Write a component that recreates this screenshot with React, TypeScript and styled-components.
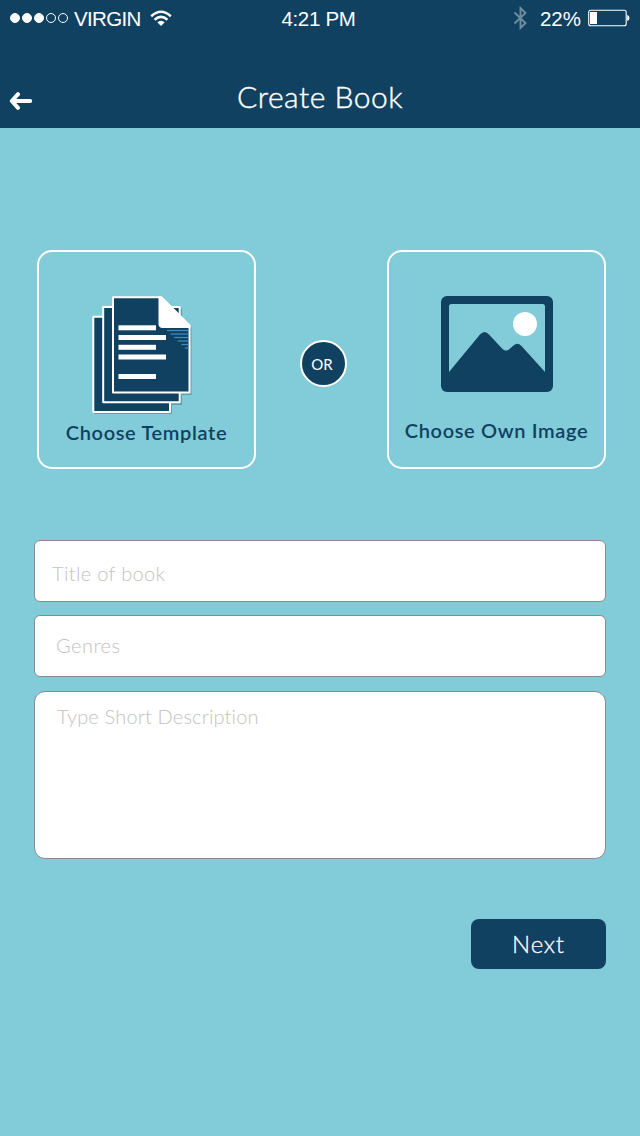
import React from "react";
import styled, { createGlobalStyle } from "styled-components";

const navy = "#114160";
const sky = "#82cbd8";

const GlobalStyle = createGlobalStyle`
  * { box-sizing: border-box; }
  body { margin: 0; background: ${sky}; }
`;

const Screen = styled.div`
  width: 640px;
  height: 1136px;
  background: ${sky};
  font-family: Lato, "Liberation Sans", sans-serif;
  overflow: hidden;
`;

const Header = styled.header`
  height: 128px;
  background: ${navy};
  color: #fff;
`;

const StatusBar = styled.div`
  display: grid;
  grid-template-columns: 1fr auto 1fr;
  grid-template-rows: 36px;
  align-items: center;
  height: 36px;
  padding: 0 10px 0 9px;
  font-family: "Liberation Sans", sans-serif;
  font-size: 20.5px;
  line-height: 36px;
  white-space: nowrap;
`;

const StatusGroup = styled.div<{ $end?: boolean }>`
  display: flex;
  align-items: center;
  justify-content: ${(p) => (p.$end ? "flex-end" : "flex-start")};
`;

const StatusText = styled.span<{ $spacing?: number; $shift?: number }>`
  padding-top: 2px;
  margin-right: ${(p) => p.$shift ?? 0}px;
  letter-spacing: ${(p) => p.$spacing ?? 0}px;
`;

const Signal = styled.div`
  display: flex;
  gap: 2px;
  margin: 0 6px 0 1px;
`;

const SignalDot = styled.i<{ $on: boolean }>`
  width: 10px;
  height: 10px;
  border: 1px solid #fff;
  border-radius: 50%;
  background: ${(p) => (p.$on ? "#fff" : "transparent")};
`;

const WifiIcon = styled.svg`
  margin-left: 9px;
`;

const BluetoothIcon = styled.svg`
  margin-right: 12px;
`;

const BatteryIcon = styled.svg`
  margin-left: 7px;
`;

const NavBar = styled.div`
  display: grid;
  grid-template-columns: 60px 1fr 60px;
  align-items: start;
  height: 92px;
`;

const BackButton = styled.button`
  display: flex;
  padding: 56px 0 0 9px;
  border: 0;
  background: none;
`;

const Title = styled.h1`
  margin: 0;
  height: 92px;
  text-align: center;
  font-size: 30px;
  font-weight: 300;
  line-height: 120px;
  letter-spacing: 0.5px;
  -webkit-text-stroke: 0.4px #fff;
`;

const Main = styled.main`
  display: flex;
  flex-direction: column;
  padding: 122px 34px 0;
`;

const Choices = styled.section`
  display: flex;
  align-items: center;
  justify-content: space-between;
  padding-left: 3px;
  margin-bottom: 71px;
`;

const ChoiceCard = styled.button<{ $labelGap: number }>`
  display: flex;
  flex-direction: column;
  align-items: center;
  justify-content: flex-start;
  gap: ${(p) => p.$labelGap}px;
  width: 219px;
  height: 219px;
  padding: 44px 0 0;
  border: 2px solid #fff;
  border-radius: 15px;
  background: transparent;
  color: ${navy};
  font-family: inherit;
`;

const ChoiceLabel = styled.span`
  font-size: 20px;
  font-weight: 600;
  line-height: 24px;
  letter-spacing: 0.65px;
  white-space: nowrap;
`;

const OrBadge = styled.div`
  width: 47px;
  height: 47px;
  margin: 8px 0 0 4px;
  padding-right: 3px;
  border: 2px solid #fff;
  border-radius: 50%;
  background: ${navy};
  color: #fff;
  font-size: 15px;
  line-height: 45px;
  text-align: center;
`;

const Form = styled.form`
  display: flex;
  flex-direction: column;
`;

const Field = styled.div<{
  $height: number;
  $radius: number;
  $gap: number;
  $top: number;
  $left: number;
  $spacing: number;
}>`
  height: ${(p) => p.$height}px;
  margin-bottom: ${(p) => p.$gap}px;
  padding: ${(p) => p.$top}px 0 0 ${(p) => p.$left}px;
  border: 1px solid #8a8a8a;
  border-radius: ${(p) => p.$radius}px;
  background: #fff;
  color: #c2c2c2;
  font-size: 20px;
  font-weight: 300;
  line-height: 24px;
  letter-spacing: ${(p) => p.$spacing}px;
`;

const NextButton = styled.button`
  align-self: flex-end;
  width: 135px;
  height: 50px;
  padding: 0;
  border: 0;
  border-radius: 8px;
  background: ${navy};
  color: #fff;
  font-family: inherit;
  font-size: 24px;
  font-weight: 300;
  line-height: 50px;
  letter-spacing: 0.8px;
  -webkit-text-stroke: 0.3px #fff;
`;

const foldShade = [0, 1, 2, 3, 4, 5];

const DocumentsIcon = () => (
  <svg width="112" height="118" viewBox="91 296 112 118">
    <g fill="#4f7f8c" opacity="0.6">
      <rect x="94" y="318" width="78" height="96" rx="1.5" />
      <rect x="104" y="308" width="78" height="97" rx="1.5" />
      <path d="M114 298H162.500L191.500 327V395H114Z" />
    </g>
    <g fill={navy} stroke="#fff" strokeWidth="2" strokeLinejoin="round">
      <rect x="93.300" y="316.700" width="76.700" height="95.300" />
      <rect x="103.200" y="307" width="76.500" height="95.300" />
      <path d="M113 297.200H161L189.500 326V392.500H113Z" />
    </g>
    <path d="M158.500 296.500H162L190.500 325V328H162Q158.500 327.500 158.500 324Z" fill="#fff" />
    <g fill="#fff">
      <rect x="118.500" y="325.300" width="37.500" height="5" />
      <rect x="118.500" y="335" width="47.500" height="5" />
      <rect x="118.500" y="344.800" width="37.500" height="5" />
      <rect x="118.500" y="354.500" width="47.500" height="5" />
      <rect x="118.500" y="374" width="37.500" height="5" />
    </g>
    <g stroke="#3d8fc4" strokeWidth="1.200">
      {foldShade.map((i) => (
        <line key={i} x1={167 + i * 3.600} x2={188.500} y1={330.500 + i * 3.500} y2={330.500 + i * 3.500} />
      ))}
    </g>
  </svg>
);

const PictureIcon = () => (
  <svg width="112" height="96" viewBox="0 0 112 96">
    <rect width="112" height="96" rx="6" fill={navy} />
    <path
      d="M10.500 8H101.500Q104 8 104 10.500V76L80.500 50Q76.500 46 72.500 49.500L68.500 53Q65 56 61.500 53L48 38.500Q43.500 33.500 39 38.500L8 76V10.500Q8 8 10.500 8Z"
      fill={sky}
    />
    <circle cx="84" cy="28" r="12" fill="#fff" />
  </svg>
);

export default function App() {
  return (
    <>
      <GlobalStyle />
      <Screen>
        <Header>
          <StatusBar>
            <StatusGroup>
              <Signal>
                {[true, true, true, false, false].map((on, i) => (
                  <SignalDot key={i} $on={on} />
                ))}
              </Signal>
              <StatusText $spacing={-0.65}>VIRGIN</StatusText>
              <WifiIcon width="22" height="17" viewBox="0 0 22 17">
                <g fill="none" stroke="#fff" strokeWidth="2.500">
                  <path d="M1.200 6.200Q11 -2.600 20.800 6.200" />
                  <path d="M4.600 9.700Q11 4 17.400 9.700" />
                </g>
                <path d="M7.300 12.300Q11 9.200 14.700 12.300L11 16Z" fill="#fff" />
              </WifiIcon>
            </StatusGroup>
            <StatusText $spacing={-0.3} $shift={2}>4:21 PM</StatusText>
            <StatusGroup $end>
              <BluetoothIcon width="15" height="24" viewBox="0 0 15 24">
                <path
                  d="M1.500 6.500L12.500 17L7.500 22V2L12.500 7L1.500 17.500"
                  fill="none"
                  stroke="#6f8da0"
                  strokeWidth="1.900"
                />
              </BluetoothIcon>
              <StatusText>22%</StatusText>
              <BatteryIcon width="42" height="18" viewBox="0 0 42 18">
                <rect x="0.700" y="1.200" width="37.500" height="15.500" rx="2" fill="none" stroke="#fff" strokeWidth="1.100" />
                <rect x="2" y="3" width="7" height="12" fill="#fff" />
                <path d="M39.200 6Q41.500 6.500 41.500 9T39.200 12Z" fill="#fff" />
              </BatteryIcon>
            </StatusGroup>
          </StatusBar>
          <NavBar>
            <BackButton aria-label="Back">
              <svg width="24" height="18" viewBox="0 0 24 18">
                <path
                  d="M9 2.200L2.800 9L9 15.800M3.500 9H21.200"
                  fill="none"
                  stroke="#fff"
                  strokeWidth="4"
                  strokeLinecap="round"
                  strokeLinejoin="round"
                />
              </svg>
            </BackButton>
            <Title>Create Book</Title>
          </NavBar>
        </Header>
        <Main>
          <Choices>
            <ChoiceCard $labelGap={6}>
              <DocumentsIcon />
              <ChoiceLabel>Choose Template</ChoiceLabel>
            </ChoiceCard>
            <OrBadge>OR</OrBadge>
            <ChoiceCard $labelGap={26}>
              <PictureIcon />
              <ChoiceLabel>Choose Own Image</ChoiceLabel>
            </ChoiceCard>
          </Choices>
          <Form>
            <Field $height={62} $radius={6} $gap={13} $top={20} $left={17} $spacing={0.35}>
              Title of book
            </Field>
            <Field $height={62} $radius={6} $gap={14} $top={17} $left={21} $spacing={0.5}>
              Genres
            </Field>
            <Field $height={168} $radius={11} $gap={60} $top={12} $left={22} $spacing={0.17}>
              Type Short Description
            </Field>
            <NextButton type="button">Next</NextButton>
          </Form>
        </Main>
      </Screen>
    </>
  );
}
